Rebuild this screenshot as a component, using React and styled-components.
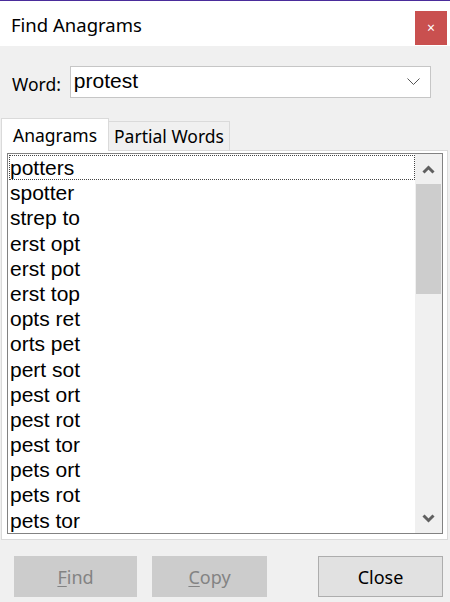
import React, { useState } from 'react';
import styled, { createGlobalStyle } from 'styled-components';

const GlobalStyle = createGlobalStyle`
  html, body {
    margin: 0;
    padding: 0;
    background: #f0f0f0;
    overflow: hidden;
  }
`;

const uiFont = '"Noto Sans", "Open Sans", sans-serif';
const listFont = '"Liberation Sans", Arial, sans-serif';

const Window = styled.div`
  width: 450px;
  height: 602px;
  display: flex;
  flex-direction: column;
  background: #f0f0f0;
  border-top: 1px solid #4a2c9b;
  box-sizing: border-box;
  font-family: ${uiFont};
`;

const TitleBar = styled.div`
  height: 46px;
  background: #ffffff;
  display: flex;
  align-items: center;
  justify-content: space-between;
  padding: 0 3px 0 11px;
`;

const Title = styled.span`
  font-size: 18.5px;
  color: #000;
  margin-top: 2px;
`;

const CloseBox = styled.button`
  width: 32px;
  height: 34px;
  border: none;
  background: #c9504f;
  color: #fff;
  font-size: 14px;
  font-family: ${uiFont};
  padding: 0;
  margin-top: 8px;
  display: flex;
  align-items: center;
  justify-content: center;
`;

const Body = styled.div`
  flex: 1;
  display: flex;
  flex-direction: column;
  padding: 20px 2px 5px 1px;
`;

const WordRow = styled.div`
  display: flex;
  align-items: center;
  gap: 9px;
  padding-left: 11px;
  padding-right: 17px;
`;

const Label = styled.label`
  font-size: 17.5px;
  margin-top: 4px;
`;

const Combo = styled.div`
  flex: 1;
  height: 30px;
  background: #fff;
  border: 1px solid #c6c6c6;
  display: flex;
  align-items: center;
  justify-content: space-between;
  padding: 0 10px 0 3px;
  font-family: ${listFont};
  font-size: 21px;
  color: #000;
`;

const ComboText = styled.span`
  margin-top: -2px;
`;

const TabStrip = styled.div`
  display: flex;
  align-items: flex-end;
  margin-top: 19px;
  height: 33px;
`;

const Tab = styled.div`
  height: ${(p) => (p.$active ? '33px' : '29px')};
  box-sizing: border-box;
  padding: 0 ${(p) => (p.$active ? '11px' : '5px')};
  background: ${(p) => (p.$active ? '#ffffff' : '#f0f0f0')};
  border: 1px solid #dadada;
  border-bottom: none;
  margin-left: ${(p) => (p.$active ? '0' : '-1px')};
  font-size: 17.5px;
  display: flex;
  align-items: center;
  position: relative;
  z-index: ${(p) => (p.$active ? 1 : 0)};
  margin-bottom: ${(p) => (p.$active ? '-1px' : '0')};
`;

const Panel = styled.div`
  height: 390px;
  background: #fff;
  border: 1px solid #dadada;
  box-sizing: border-box;
  padding: 2px 4px 5px 5px;
  display: flex;
`;

const ListBox = styled.div`
  flex: 1;
  border: 1px solid #828282;
  display: flex;
  overflow: hidden;
`;

const Items = styled.ul`
  flex: 1;
  list-style: none;
  margin: 0;
  padding: 1px 0 0 1px;
  font-family: ${listFont};
  font-size: 21px;
  color: #000;
`;

const Item = styled.li`
  height: 25.2px;
  line-height: 24px;
  padding-left: 0;
  box-sizing: border-box;
  border: 1px dotted ${(p) => (p.$focused ? '#444' : 'transparent')};
  white-space: nowrap;
`;

const ScrollBar = styled.div`
  width: 27px;
  background: #f0f0f0;
  display: flex;
  flex-direction: column;
`;

const Arrow = styled.div`
  height: 30px;
  display: flex;
  align-items: center;
  justify-content: center;
`;

const Track = styled.div`
  flex: 1;
  padding: 0 1px;
`;

const Thumb = styled.div`
  height: 110px;
  background: #cdcdcd;
`;

const ButtonRow = styled.div`
  display: flex;
  margin-top: 16px;
  padding-left: 13px;
  gap: 15px;
`;

const Button = styled.button`
  width: ${(p) => p.$width}px;
  height: 41px;
  box-sizing: border-box;
  font-family: ${uiFont};
  font-size: 18px;
  border: 1px solid ${(p) => (p.disabled ? '#cccccc' : '#adadad')};
  background: ${(p) => (p.disabled ? '#cccccc' : '#e1e1e1')};
  color: ${(p) => (p.disabled ? '#838383' : '#000')};
  margin-left: ${(p) => p.$push || 0}px;
  padding: 0;
`;

const Key = styled.span`
  text-decoration: underline;
  text-underline-offset: 2px;
`;

const words = [
  'potters', 'spotter', 'strep to', 'erst opt', 'erst pot', 'erst top',
  'opts ret', 'orts pet', 'pert sot', 'pest ort', 'pest rot', 'pest tor',
  'pets ort', 'pets rot', 'pets tor',
];

function Chevron({ up }) {
  return (
    <svg width="13" height="9" viewBox="0 0 13 9">
      <path
        d={up ? 'M1.5 7.5 L6.5 2.5 L11.5 7.5' : 'M1.5 1.5 L6.5 6.5 L11.5 1.5'}
        fill="none"
        stroke="#606060"
        strokeWidth="3"
      />
    </svg>
  );
}

export default function App() {
  const [tab, setTab] = useState('anagrams');

  return (
    <>
      <GlobalStyle />
      <Window>
        <TitleBar>
          <Title>Find Anagrams</Title>
          <CloseBox aria-label="Close">×</CloseBox>
        </TitleBar>
        <Body>
          <WordRow>
            <Label>Word:</Label>
            <Combo>
              <ComboText>protest</ComboText>
              <svg width="13" height="8" viewBox="0 0 13 8">
                <path d="M0.5 0.5 L6.5 6.5 L12.5 0.5" fill="none" stroke="#555" strokeWidth="1" />
              </svg>
            </Combo>
          </WordRow>
          <TabStrip>
            <Tab $active={tab === 'anagrams'} onClick={() => setTab('anagrams')}>Anagrams</Tab>
            <Tab $active={tab === 'partial'} onClick={() => setTab('partial')}>Partial Words</Tab>
          </TabStrip>
          <Panel>
            <ListBox>
              <Items>
                {words.map((w, i) => (
                  <Item key={w} $focused={i === 0}>{w}</Item>
                ))}
              </Items>
              <ScrollBar>
                <Arrow><Chevron up /></Arrow>
                <Track><Thumb /></Track>
                <Arrow><Chevron /></Arrow>
              </ScrollBar>
            </ListBox>
          </Panel>
          <ButtonRow>
            <Button disabled $width={123}><Key>F</Key>ind</Button>
            <Button disabled $width={115}><Key>C</Key>opy</Button>
            <Button $width={125} $push={36}>Close</Button>
          </ButtonRow>
        </Body>
      </Window>
    </>
  );
}
